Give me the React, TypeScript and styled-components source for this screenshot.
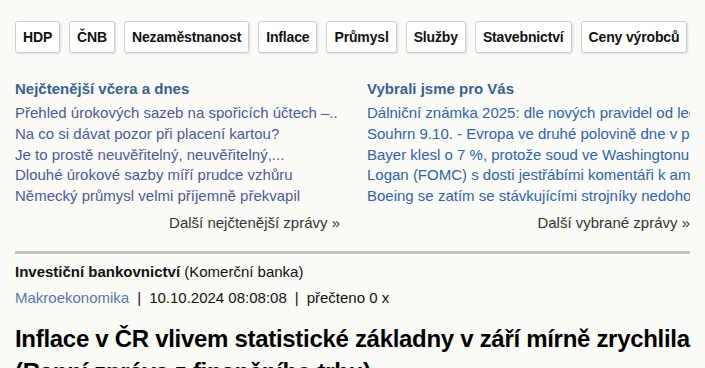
import { FC } from 'react';
import styled, { createGlobalStyle } from 'styled-components';

const topics = [
  'HDP',
  'ČNB',
  'Nezaměstnanost',
  'Inflace',
  'Průmysl',
  'Služby',
  'Stavebnictví',
  'Ceny výrobců',
];

const mostRead = [
  'Přehled úrokových sazeb na spořicích účtech –..',
  'Na co si dávat pozor při placení kartou?',
  'Je to prostě neuvěřitelný, neuvěřitelný,...',
  'Dlouhé úrokové sazby míří prudce vzhůru',
  'Německý průmysl velmi příjemně překvapil',
];

const picked = [
  'Dálniční známka 2025: dle nových pravidel od ledna',
  'Souhrn 9.10. - Evropa ve druhé polovině dne v plusu',
  'Bayer klesl o 7 %, protože soud ve Washingtonu rozhodl',
  'Logan (FOMC) s dosti jestřábími komentáři k americké ekonomice',
  'Boeing se zatím se stávkujícími strojníky nedohodl',
];

const GlobalStyle = createGlobalStyle`
  html, body {
    margin: 0;
    padding: 0;
    background: #fafaf6;
    font-family: 'Liberation Sans', Arial, sans-serif;
    overflow: hidden;
  }
`;

export const App: FC = () => (
  <>
    <GlobalStyle />
    <Page>
      <Topics>
        {topics.map((topic) => (
          <Topic key={topic}>{topic}</Topic>
        ))}
      </Topics>

      <Columns>
        <Column>
          <ColumnTitle>Nejčtenější včera a dnes</ColumnTitle>
          {mostRead.map((item) => (
            <NewsLink key={item} $visited>
              {item}
            </NewsLink>
          ))}
          <More>Další nejčtenější zprávy »</More>
        </Column>
        <Column>
          <ColumnTitle>Vybrali jsme pro Vás</ColumnTitle>
          {picked.map((item) => (
            <NewsLink key={item}>{item}</NewsLink>
          ))}
          <More>Další vybrané zprávy »</More>
        </Column>
      </Columns>

      <Divider />

      <Source>
        <strong>Investiční bankovnictví</strong> (Komerční banka)
      </Source>
      <Meta>
        <Category>Makroekonomika</Category>
        <Sep>|</Sep>
        <span>10.10.2024 08:08:08</span>
        <Sep>|</Sep>
        <span>přečteno 0 x</span>
      </Meta>

      <Headline>
        Inflace v ČR vlivem statistické základny v září mírně zrychlila
        (Ranní zpráva z finančního trhu)
      </Headline>
    </Page>
  </>
);

export default App;

const Page = styled.div`
  width: 675px;
  padding: 21px 15px 0;
`;

const Topics = styled.div`
  display: flex;
  gap: 9px;
`;

const Topic = styled.button`
  height: 32px;
  padding: 0 7px;
  border: 1px solid #cfcfcf;
  border-radius: 3px;
  background: #fff;
  box-shadow: 1px 1px 2px rgba(0, 0, 0, 0.12);
  font-family: inherit;
  font-size: 14px;
  font-weight: bold;
  letter-spacing: -0.15px;
  color: #111;
  white-space: nowrap;
`;

const Columns = styled.div`
  display: grid;
  grid-template-columns: 325px 323px;
  column-gap: 27px;
  margin-top: 26px;
`;

const Column = styled.div`
  display: flex;
  flex-direction: column;
  min-width: 0;
`;

const ColumnTitle = styled.div`
  margin-bottom: 5px;
  font-size: 15px;
  font-weight: bold;
  line-height: 19px;
  color: #3b5f8e;
`;

const NewsLink = styled.a<{ $visited?: boolean }>`
  display: block;
  overflow: hidden;
  font-size: 15px;
  line-height: 20.75px;
  white-space: nowrap;
  color: ${({ $visited }) => ($visited ? '#4a5b95' : '#2f64a6')};
  cursor: pointer;
`;

const More = styled.a`
  align-self: flex-end;
  margin-top: 5px;
  font-size: 15px;
  line-height: 21px;
  color: #333;
`;

const Divider = styled.hr`
  margin: 18px 0 0;
  border: 0;
  height: 3px;
  background: #c2c2c2;
`;

const Source = styled.div`
  margin-top: 8px;
  font-size: 15px;
  line-height: 20px;
  color: #111;
`;

const Meta = styled.div`
  display: flex;
  margin-top: 6px;
  font-size: 15px;
  line-height: 20px;
  color: #111;
`;

const Category = styled.a`
  color: #5b77a6;
`;

const Sep = styled.span`
  margin: 0 8px;
`;

const Headline = styled.h1`
  margin: 14px 0 0;
  font-size: 24px;
  line-height: 33px;
  letter-spacing: -0.3px;
  font-weight: bold;
  color: #000;
`;
